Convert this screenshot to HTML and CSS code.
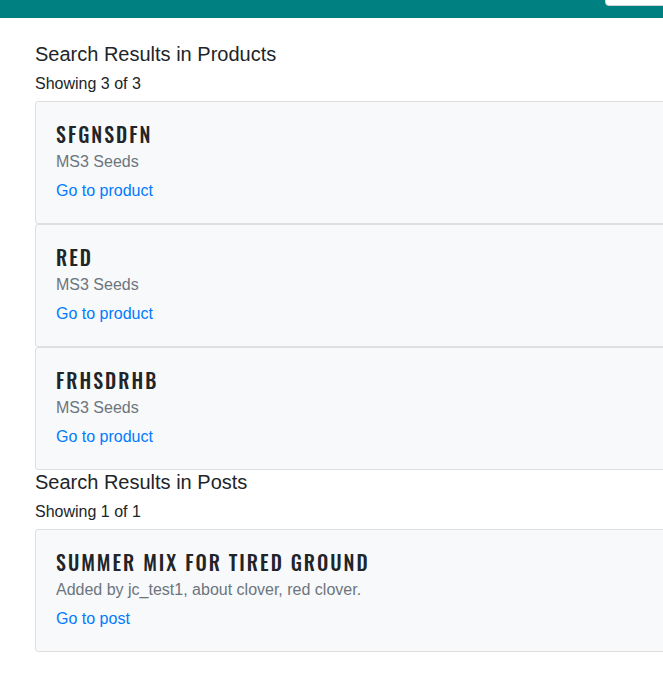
FILE: index.html
```html
<!DOCTYPE html>
<html lang="en">
<head>
<meta charset="utf-8">
<title>Search Results</title>
<link rel="stylesheet" href="styles.css">
</head>
<body>
<nav class="topbar">
  <input class="search-input" type="text" aria-label="Search">
</nav>
<main class="results">
  <section class="result-group">
    <h5 class="group-title">Search Results in Products</h5>
    <p class="group-count">Showing 3 of 3</p>
    <div class="card">
      <div class="card-body">
        <h5 class="card-title">SFGNSDFN</h5>
        <h6 class="card-subtitle">MS3 Seeds</h6>
        <a class="card-link" href="#">Go to product</a>
      </div>
    </div>
    <div class="card">
      <div class="card-body">
        <h5 class="card-title">RED</h5>
        <h6 class="card-subtitle">MS3 Seeds</h6>
        <a class="card-link" href="#">Go to product</a>
      </div>
    </div>
    <div class="card">
      <div class="card-body">
        <h5 class="card-title">FRHSDRHB</h5>
        <h6 class="card-subtitle">MS3 Seeds</h6>
        <a class="card-link" href="#">Go to product</a>
      </div>
    </div>
  </section>
  <section class="result-group">
    <h5 class="group-title">Search Results in Posts</h5>
    <p class="group-count">Showing 1 of 1</p>
    <div class="card">
      <div class="card-body">
        <h5 class="card-title">SUMMER MIX FOR TIRED GROUND</h5>
        <h6 class="card-subtitle">Added by jc_test1, about clover, red clover.</h6>
        <a class="card-link" href="#">Go to post</a>
      </div>
    </div>
  </section>
</main>
</body>
</html>
```
FILE: styles.css
```css
html, body {
  margin: 0;
  padding: 0;
  overflow-x: hidden;
  background: #ffffff;
}
body {
  font-family: "Liberation Sans", Arial, sans-serif;
  font-size: 16px;
  line-height: 1.5;
  color: #212529;
}
.topbar {
  height: 18px;
  background: #008080;
  display: flex;
  justify-content: flex-start;
  overflow: hidden;
}
.search-input {
  margin: -24px 0 0 605px;
  width: 200px;
  height: 30px;
  box-sizing: border-box;
  border: 1px solid #ced4da;
  border-radius: 4px;
  background: #fff;
  padding: 0;
  flex: none;
}
.results {
  padding: 24px 0 0 35px;
}
.result-group {
  width: 700px;
}
.group-title {
  margin: 0 0 6px;
  font-size: 20px;
  line-height: 24px;
  font-weight: 400;
}
.group-count {
  margin: 0 0 5px;
  font-size: 16px;
  line-height: 24px;
}
.card {
  background: #f8f9fa;
  border: 1px solid #dfdfdf;
  border-radius: 3px;
}
.card-body {
  padding: 22px 20px 20px;
  display: flex;
  flex-direction: column;
  align-items: flex-start;
}
.card-title {
  margin: 0 0 5px;
  font-family: "Oswald", "Liberation Sans Narrow", "DejaVu Sans Condensed", sans-serif;
  font-weight: 500;
  font-size: 20px;
  line-height: 21px;
  letter-spacing: 2px;
  color: #212529;
}
.card-subtitle {
  margin: 0;
  font-size: 16px;
  line-height: 24px;
  font-weight: 400;
  color: #6c757d;
}
.card-link {
  margin-top: 5px;
  font-size: 16px;
  line-height: 24px;
  color: #007bff;
  text-decoration: none;
}
```
